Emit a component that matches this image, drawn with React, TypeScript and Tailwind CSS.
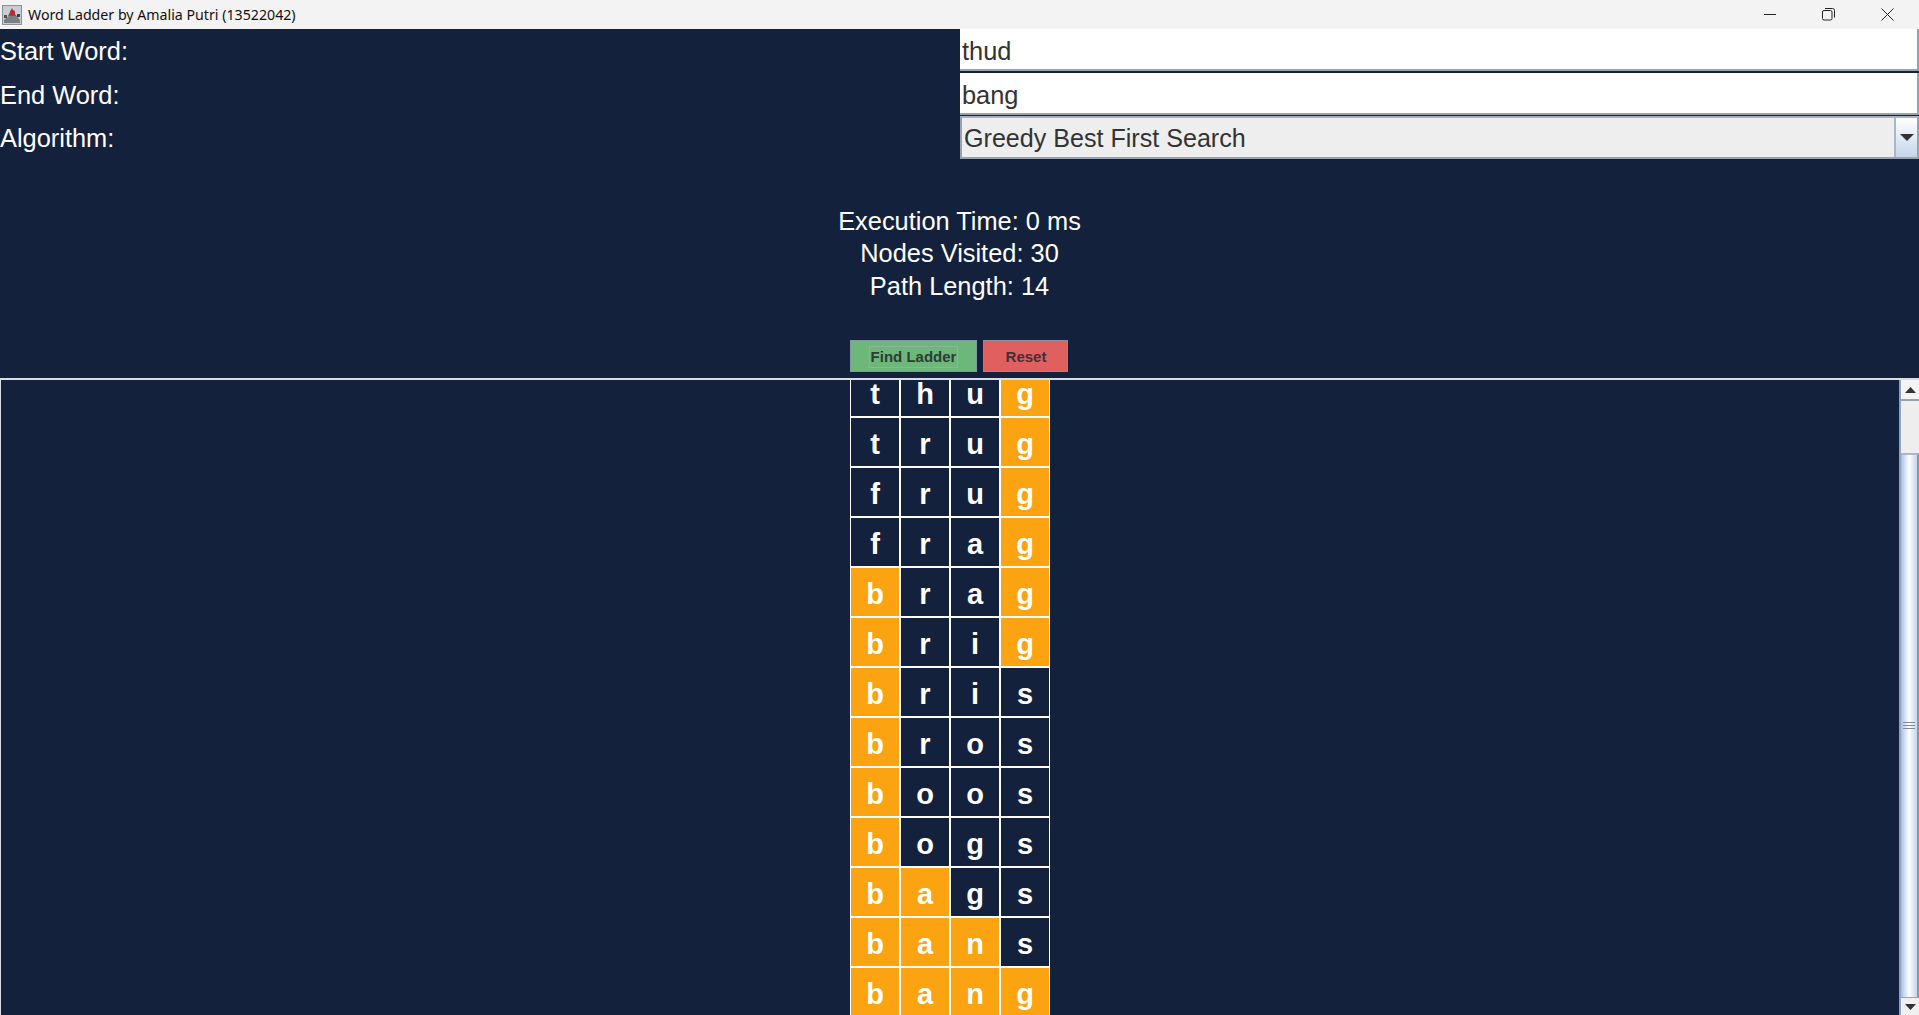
const font = "font-['Liberation_Sans',Arial,sans-serif]";

const words: [string, boolean[]][] = [
  ["thug", [false, false, false, true]],
  ["trug", [false, false, false, true]],
  ["frug", [false, false, false, true]],
  ["frag", [false, false, false, true]],
  ["brag", [true, false, false, true]],
  ["brig", [true, false, false, true]],
  ["bris", [true, false, false, false]],
  ["bros", [true, false, false, false]],
  ["boos", [true, false, false, false]],
  ["bogs", [true, false, false, false]],
  ["bags", [true, true, false, false]],
  ["bans", [true, true, true, false]],
  ["bang", [true, true, true, true]],
];

function AppIcon() {
  return (
    <svg width="20" height="20" viewBox="0 0 20 20" className="shrink-0">
      <rect x="0" y="0" width="20" height="20" fill="#c9ccd0" />
      <rect x="0.5" y="0.5" width="19" height="19" fill="none" stroke="#8d9298" />
      <path d="M2 15 L8 10 L14 10 L18 15 L18 18 L2 18 Z" fill="#7c8085" />
      <path d="M6 11 L10 3 L14 11 Z" fill="#5d5f66" />
      <circle cx="10.5" cy="7.5" r="2.6" fill="#c8242f" />
      <rect x="15" y="9" width="3" height="3" fill="#3f4248" />
      <rect x="2" y="10" width="3" height="3" fill="#4a4d52" />
    </svg>
  );
}

function Row({ label, children }: { label: string; children: React.ReactNode }) {
  return (
    <div className="flex h-[43.5px]">
      <div className="w-[960px] text-[25.4px] leading-[44px] text-white">{label}</div>
      <div className="flex-1">{children}</div>
    </div>
  );
}

function Field({ value }: { value: string }) {
  return (
    <div className="h-[42px] border-b-2 border-r-2 border-[#98a2ad] bg-white pl-[2px] text-[25.4px] leading-[45px] text-[#333333]">
      {value}
    </div>
  );
}

function ScrollBar() {
  return (
    <div className="flex w-[20px] shrink-0 flex-col border-l-2 border-[#8ea3c4] bg-[#eeeeee]">
      <div className="flex h-[19px] items-center justify-center bg-[#f4f4f4]">
        <svg width="11" height="6" viewBox="0 0 11 6"><path d="M5.5 0 L11 6 L0 6 Z" fill="#333333" /></svg>
      </div>
      <div className="h-[2px] bg-[#9aa3ad]" />
      <div className="h-[52px] bg-[#eeeeee]" />
      <div className="h-[2px] bg-[#a9b6cc]" />
      <div className="relative flex flex-1 items-center justify-center border-r-2 border-[#8a96a3] bg-gradient-to-r from-[#a9c0e4] via-[#ffffff] to-[#c5d5ea] pb-[2px]">
        <div className="flex flex-col gap-[2px]">
          <div className="h-px w-[12px] bg-[#7d8ca3]" />
          <div className="h-px w-[12px] bg-[#7d8ca3]" />
          <div className="h-px w-[12px] bg-[#7d8ca3]" />
        </div>
      </div>
      <div className="h-px bg-[#9aa3ad]" />
      <div className="flex h-[17px] items-center justify-center bg-[#f0f0f0]">
        <svg width="11" height="6" viewBox="0 0 11 6"><path d="M0 0 L11 0 L5.5 6 Z" fill="#333333" /></svg>
      </div>
    </div>
  );
}

export default function App() {
  return (
    <div className={`flex h-[1015px] w-[1919px] flex-col overflow-hidden bg-[#14213d] ${font}`}>
      <div className="flex h-[29px] shrink-0 items-center bg-[#f3f3f3]">
        <div className="ml-[2px] mr-[6px] flex"><AppIcon /></div>
        <span className="font-['Noto_Sans',sans-serif] text-[14.2px] text-[#111111]">Word Ladder by Amalia Putri (13522042)</span>
        <div className="ml-auto flex h-full items-center pr-[2px]">
          <div className="flex w-[58px] justify-center">
            <svg width="12" height="12" viewBox="0 0 12 12"><path d="M0 5.5 H12" stroke="#222" strokeWidth="1" /></svg>
          </div>
          <div className="flex w-[59px] justify-center">
            <svg width="13" height="13" viewBox="0 0 13 13" fill="none" stroke="#222" strokeWidth="1">
              <rect x="0.5" y="2.5" width="9.5" height="9.5" rx="1.5" />
              <path d="M3 0.5 H10.5 Q12.5 0.5 12.5 2.5 V9.5" />
            </svg>
          </div>
          <div className="flex w-[59px] justify-center">
            <svg width="13" height="13" viewBox="0 0 13 13"><path d="M0.5 0.5 L12.5 12.5 M12.5 0.5 L0.5 12.5" stroke="#222" strokeWidth="1" /></svg>
          </div>
        </div>
      </div>

      <Row label="Start Word:"><Field value="thud" /></Row>
      <Row label="End Word:"><Field value="bang" /></Row>
      <Row label="Algorithm:">
        <div className="flex h-[43px] border-2 border-[#98a2ad] border-t-[#a8b2bd] bg-[#eeeeee]">
          <div className="flex-1 pl-[2px] text-[25.1px] leading-[41px] text-[#333333]">Greedy Best First Search</div>
          <div className="flex w-[23px] items-center justify-center border-l-2 border-[#a8b8cc] bg-gradient-to-b from-[#ffffff] to-[#c5d5ea]">
            <svg width="14" height="7" viewBox="0 0 14 7"><path d="M0 0 L14 0 L7 7 Z" fill="#333333" /></svg>
          </div>
        </div>
      </Row>

      <div className="mt-[45px] flex flex-col items-center text-[25.4px] leading-[32.5px] text-white">
        <div>Execution Time: 0 ms</div>
        <div>Nodes Visited: 30</div>
        <div>Path Length: 14</div>
      </div>

      <div className="mt-[38px] flex justify-center gap-[6px] pr-[1px]">
        <div className="flex h-[32px] w-[127px] items-center justify-center border border-[#7f9aa0] bg-[#6db77a] pt-px text-[15px] font-bold text-[#2f3b38]">
          <span className="border border-[#8fb3a3] px-px leading-[20px]">Find Ladder</span>
        </div>
        <div className="flex h-[32px] w-[85px] items-center justify-center border border-[#8f8a9a] bg-[#e0605f] pl-px pt-[2px] text-[15px] font-bold text-[#452f38]">
          Reset
        </div>
      </div>

      <div className="mt-[6px] flex min-h-0 flex-1 border-l border-t-2 border-[#d8dde3]">
        <div className="min-w-0 flex-1 overflow-hidden">
          <div className="-mt-[13px] flex flex-col items-center">
            <div className="flex flex-col">
              {words.map(([word, hits], r) => (
                <div key={r} className="flex">
                  {word.split("").map((ch, c) => (
                    <div
                      key={c}
                      className={`flex h-[50px] w-[50px] items-center justify-center border border-white pt-[5px] text-[29px] font-bold leading-none text-white ${hits[c] ? "bg-[#fca311]" : "bg-[#14213d]"}`}
                    >
                      {ch}
                    </div>
                  ))}
                </div>
              ))}
            </div>
          </div>
        </div>
        <ScrollBar />
      </div>
    </div>
  );
}
